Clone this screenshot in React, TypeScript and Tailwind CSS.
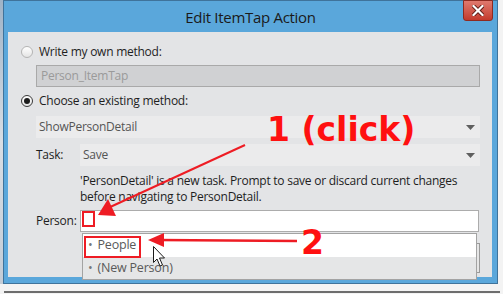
const font = "font-['Segoe_UI','Open_Sans','Noto_Sans',sans-serif]";

const Radio = ({ checked }: { checked?: boolean }) => (
    <span
        className={`w-[12px] h-[12px] rounded-full border flex items-center justify-center bg-gradient-to-b from-white to-[#e4e4e4] ${
            checked ? "border-[#3a3a3a]" : "border-[#b4b4b4]"
        }`}
    >
        {checked && <span className="w-[6px] h-[6px] rounded-full bg-[#1b1b1b]" />}
    </span>
);

const Caret = () => (
    <svg width="9" height="5" viewBox="0 0 9 5">
        <path d="M0 0 L9 0 L4.5 5 Z" fill="#5f5f5f" />
    </svg>
);

const Select = ({ value, className }: { value: string; className: string }) => (
    <div className={`h-[22px] bg-[#ebebec] flex items-center justify-between pl-[3px] pr-[5px] ${className}`}>
        <span className="text-[#555]">{value}</span>
        <Caret />
    </div>
);

export default function App() {
    return (
        <div className={`relative w-[503px] h-[294px] overflow-hidden bg-[#f3f3f3] ${font}`}>
            <div className="absolute left-0 top-0 w-[3px] h-[284px] bg-gradient-to-b from-[#9fb3c7] via-[#d9dee4] to-[#c3ccd6]" />
            <div className="absolute left-[4px] top-[291px] w-[496px] h-[2px] bg-[#6d6d6d]" />

            {/* dialog window */}
            <div className="ml-[3px] w-[495px] h-[284px] border border-[#3f739b] bg-[#5aa7db] flex flex-col">
                <div className="relative h-[31px] flex items-center justify-center">
                    <span className="text-[15px] text-[#1a1a1a] pt-[2px] tracking-[-0.3px]">Edit ItemTap Action</span>
                    <div className="absolute right-[4px] -top-px w-[30px] h-[21px] rounded-b-[3px] border border-[#8f2a20] bg-gradient-to-b from-[#e0796e] to-[#c3392c] flex items-center justify-center">
                        <svg width="12" height="11" viewBox="0 0 12 11">
                            <path d="M1.5 1 L10.5 10 M10.5 1 L1.5 10" stroke="#5a1a14" strokeWidth="4" strokeLinecap="square" />
                            <path d="M1.5 1 L10.5 10 M10.5 1 L1.5 10" stroke="#ffffff" strokeWidth="2.2" strokeLinecap="square" />
                        </svg>
                    </div>
                </div>

                <div className="relative ml-[4px] w-[484px] h-[245px] bg-[#e3e4e6] text-[12px] tracking-[-0.25px] text-[#1e1e1e] whitespace-nowrap">
                    <div className="flex items-center gap-[6px] pl-[13px] pt-[14px] h-[26px]">
                        <Radio />
                        <span>Write my own method:</span>
                    </div>
                    <div className="ml-[28px] mt-[7px] w-[444px] h-[22px] border border-[#a9a9a9] bg-[#d0d1d3] flex items-center pl-[4px] text-[#9a9a9a]">
                        Person_ItemTap
                    </div>
                    <div className="flex items-center gap-[6px] pl-[13px] mt-[8px] h-[12px]">
                        <Radio checked />
                        <span>Choose an existing method:</span>
                    </div>
                    <Select value="ShowPersonDetail" className="ml-[28px] mt-[9px] w-[444px]" />
                    <div className="flex items-center mt-[6px] ml-[28px]">
                        <span className="w-[44px]">Task:</span>
                        <Select value="Save" className="w-[400px]" />
                    </div>
                    <div className="ml-[72px] mt-[7px] leading-[16px] w-[400px]">
                        <div>'PersonDetail' is a new task. Prompt to save or discard current changes</div>
                        <div>before navigating to PersonDetail.</div>
                    </div>
                    <div className="flex items-center mt-[5px] ml-[28px]">
                        <span className="w-[44px]">Person:</span>
                        <div className="w-[399px] h-[22px] border border-[#acacac] bg-white" />
                    </div>
                    <div className="absolute left-[466px] top-[211px] w-[6px] h-[30px] border border-[#9a9a9a] bg-[#e6e6e6]" />
                </div>
            </div>

            {/* dropdown popup */}
            <div className="absolute left-[82px] top-[233px] w-[395px] h-[47px] border border-[#a3a3a3] bg-[#e5e6e7] text-[12.5px] tracking-[-0.2px] text-[#5a5a5a]">
                <div className="h-[23px] bg-white flex items-center pl-[5px]">
                    <span className="text-[#777] mr-[5px]">•</span>People
                </div>
                <div className="h-[22px] flex items-center pl-[5px]">
                    <span className="text-[#777] mr-[5px]">•</span>(New Person)
                </div>
            </div>

            {/* annotations */}
            <div className="absolute left-[82px] top-[211px] w-[13px] h-[16px] border-2 border-[#ee1c24]" />
            <div className="absolute left-[84px] top-[236px] w-[57px] h-[22px] border-2 border-[#ee1c24]" />
            <svg className="absolute left-0 top-0 pointer-events-none" width="503" height="294" viewBox="0 0 503 294">
                <line x1="245" y1="145" x2="108" y2="208" stroke="#ee1c24" strokeWidth="2" />
                <path d="M98 215 L108 199 L116 216 Z" fill="#ee1c24" />
                <line x1="297" y1="241" x2="158" y2="240" stroke="#ee1c24" strokeWidth="2.5" />
                <path d="M148 240 L164 233 L164 247 Z" fill="#ee1c24" />
                <path
                    d="M153.5 246.5 L153.5 262.5 L157 259 L160 266 L162.5 265 L159.5 258 L164.5 258 Z"
                    fill="#ffffff"
                    stroke="#1a1a1a"
                    strokeWidth="1"
                    strokeLinejoin="round"
                />
            </svg>
            <div className="absolute left-[267px] top-[113px] font-['DejaVu_Sans',sans-serif] font-bold text-[33px] leading-none text-[#ff1010] whitespace-nowrap">
                1 (click)
            </div>
            <div className="absolute left-[301px] top-[226px] font-['DejaVu_Sans',sans-serif] font-bold text-[33px] leading-none text-[#ff1010]">
                2
            </div>
        </div>
    );
}
